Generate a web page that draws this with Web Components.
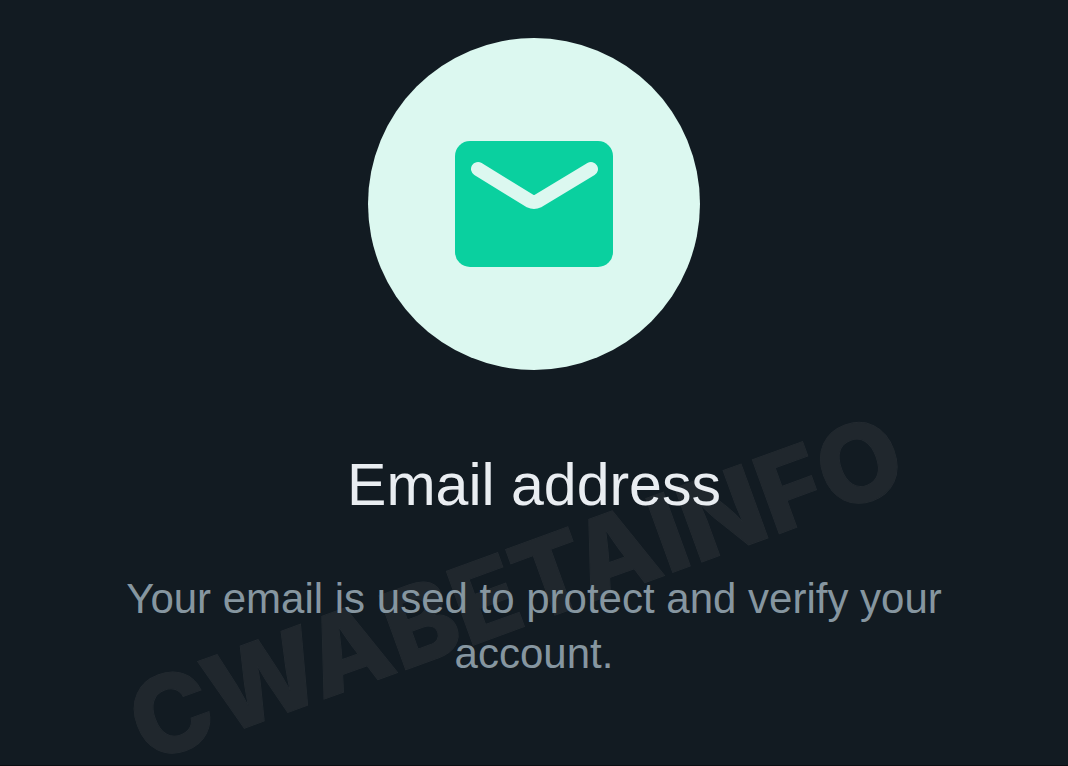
<!DOCTYPE html>
<html lang="en">
<head>
<meta charset="utf-8">
<meta name="viewport" content="width=device-width, initial-scale=1">
<title>Email address</title>
<style>
  html, body { margin: 0; min-height: 100%; background: #121b22; }
  body { font-family: "Liberation Sans", Arial, sans-serif; }
</style>
</head>
<body>
<email-screen>
  <mail-badge slot="icon"></mail-badge>
  <span slot="title">Email address</span>
  <span slot="text">Your email is used to protect and verify your account.</span>
  <water-mark slot="mark">CWABETAINFO</water-mark>
</email-screen>
<script>
  class MailBadge extends HTMLElement {
    constructor() {
      super();
      this.attachShadow({ mode: "open" }).innerHTML = `
        <style>
          :host { display: flex; align-items: center; justify-content: center;
                  width: 332px; height: 332px; border-radius: 50%; background: #dcf8f0; }
          svg { display: block; width: 158px; height: 126px; }
        </style>
        <svg viewBox="0 0 158 126" aria-hidden="true">
          <rect width="158" height="126" rx="15" fill="#0ad09f"/>
          <path d="M23 28 L75 60 Q79 62 83 60 L136 28" fill="none" stroke="#dcf8f0" stroke-width="14" stroke-linecap="round" stroke-linejoin="round"/>
        </svg>`;
    }
  }
  class WaterMark extends HTMLElement {
    constructor() {
      super();
      this.attachShadow({ mode: "open" }).innerHTML = `
        <style>
          :host { display: block; color: #20272d; font: 800 108px/80px Inter, sans-serif;
                  white-space: nowrap; pointer-events: none; user-select: none; }
          span { display: block; transform: rotate(-20deg); -webkit-text-stroke: 1px #252c32;
                 paint-order: stroke fill; }
        </style>
        <span><slot></slot></span>`;
    }
  }
  class EmailScreen extends HTMLElement {
    constructor() {
      super();
      this.attachShadow({ mode: "open" }).innerHTML = `
        <style>
          :host { display: block; position: relative; overflow: hidden; box-sizing: border-box;
                  min-height: 100vh; background: #121b22; border-bottom: 1px solid #0a0d12; }
          main { position: relative; z-index: 1; display: flex; flex-direction: column;
                 align-items: center; padding: 38px 96px 80px; text-align: center; }
          h1 { margin: 80px 0 0; font-size: 59px; line-height: 70px; font-weight: 400; color: #e9edf1; }
          p { margin: 51px 0 0; font-size: 42px; line-height: 55px; color: #8696a0; }
          .mark { position: absolute; inset: 410px 36px 0 0; display: flex;
                  align-items: center; justify-content: center; }
        </style>
        <div class="mark"><slot name="mark"></slot></div>
        <main>
          <slot name="icon"></slot>
          <h1><slot name="title"></slot></h1>
          <p><slot name="text"></slot></p>
        </main>`;
    }
  }
  customElements.define("mail-badge", MailBadge);
  customElements.define("water-mark", WaterMark);
  customElements.define("email-screen", EmailScreen);
</script>
</body>
</html>
